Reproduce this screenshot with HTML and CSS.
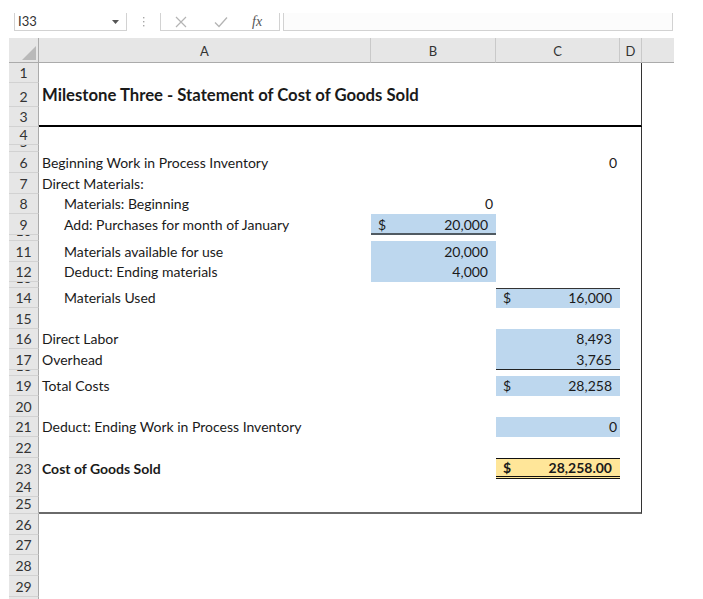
FILE: index.html
```html
<!DOCTYPE html>
<html lang="en">
<head>
<meta charset="utf-8">
<title>Statement of Cost of Goods Sold</title>
<link rel="stylesheet" href="styles.css">
</head>
<body>
<div class="fbar">
  <div class="namebox">
    <span class="ref">I33</span>
    <svg class="dd" width="7" height="4" viewBox="0 0 7 4"><path d="M0 0H7L3.5 4Z" fill="#555"/></svg>
  </div>
  <div class="grip">
    <svg width="3" height="12" viewBox="0 0 3 12"><rect x="1" y="1" width="1.4" height="1.4" fill="#a8a8a8"/><rect x="1" y="5" width="1.4" height="1.4" fill="#a8a8a8"/><rect x="1" y="9" width="1.4" height="1.4" fill="#a8a8a8"/></svg>
  </div>
  <div class="fbtns">
    <svg class="ic-x" width="12" height="12" viewBox="0 0 12 12"><path d="M1 1L11 11M11 1L1 11" stroke="#b4b4b4" stroke-width="1.2" fill="none"/></svg>
    <svg class="ic-ok" width="14" height="12" viewBox="0 0 14 12"><path d="M1 6.5L5 10.5L13 1.5" stroke="#b4b4b4" stroke-width="1.3" fill="none"/></svg>
    <span class="fx">fx</span>
  </div>
  <div class="finput"></div>
</div>

<div class="sheet">
  <div class="row hdr">
    <div class="corner"><svg width="14" height="14" viewBox="0 0 14 14"><path d="M14 0V14H0Z" fill="#b9b9b9"/></svg></div>
    <div class="ch">A</div>
    <div class="ch">B</div>
    <div class="ch">C</div>
    <div class="ch">D</div>
    <div class="ch rest"></div>
  </div>

  <div class="row h20"><div class="rh">1</div><div class="c"></div><div class="c"></div><div class="c"></div><div class="c d"></div></div>
  <div class="row h24"><div class="rh">2</div><div class="c title">Milestone Three - Statement of Cost of Goods Sold</div><div class="c"></div><div class="c"></div><div class="c d"></div></div>
  <div class="row h20"><div class="rh">3</div><div class="c rule"></div><div class="c rule"></div><div class="c rule"></div><div class="c d rule"></div></div>
  <div class="row h18"><div class="rh">4</div><div class="c"></div><div class="c"></div><div class="c"></div><div class="c d"></div></div>
  <div class="row h7"><div class="rh">5</div><div class="c"></div><div class="c"></div><div class="c"></div><div class="c d"></div></div>
  <div class="row h21"><div class="rh">6</div><div class="c">Beginning Work in Process Inventory</div><div class="c"></div><div class="c num">0</div><div class="c d"></div></div>
  <div class="row h21"><div class="rh">7</div><div class="c">Direct Materials:</div><div class="c"></div><div class="c"></div><div class="c d"></div></div>
  <div class="row h20"><div class="rh">8</div><div class="c ind">Materials: Beginning</div><div class="c num">0</div><div class="c"></div><div class="c d"></div></div>
  <div class="row h21"><div class="rh">9</div><div class="c ind">Add: Purchases for month of January</div><div class="c acct blue ul2"><span>$</span><span>20,000</span></div><div class="c"></div><div class="c d"></div></div>
  <div class="row h6"><div class="rh">10</div><div class="c"></div><div class="c"></div><div class="c"></div><div class="c d"></div></div>
  <div class="row h21"><div class="rh">11</div><div class="c ind">Materials available for use</div><div class="c acct blue"><span></span><span>20,000</span></div><div class="c"></div><div class="c d"></div></div>
  <div class="row h20"><div class="rh">12</div><div class="c ind">Deduct: Ending materials</div><div class="c acct blue"><span></span><span>4,000</span></div><div class="c"></div><div class="c d"></div></div>
  <div class="row h6"><div class="rh">13</div><div class="c"></div><div class="c"></div><div class="c"></div><div class="c d"></div></div>
  <div class="row h20"><div class="rh">14</div><div class="c ind">Materials Used</div><div class="c"></div><div class="c acct blue ol1"><span>$</span><span>16,000</span></div><div class="c d"></div></div>
  <div class="row h21"><div class="rh">15</div><div class="c"></div><div class="c"></div><div class="c"></div><div class="c d"></div></div>
  <div class="row h20"><div class="rh">16</div><div class="c">Direct Labor</div><div class="c"></div><div class="c acct blue"><span></span><span>8,493</span></div><div class="c d"></div></div>
  <div class="row h21"><div class="rh">17</div><div class="c">Overhead</div><div class="c"></div><div class="c acct blue ul1"><span></span><span>3,765</span></div><div class="c d"></div></div>
  <div class="row h6"><div class="rh">18</div><div class="c"></div><div class="c"></div><div class="c"></div><div class="c d"></div></div>
  <div class="row h20"><div class="rh">19</div><div class="c">Total Costs</div><div class="c"></div><div class="c acct blue"><span>$</span><span>28,258</span></div><div class="c d"></div></div>
  <div class="row h21"><div class="rh">20</div><div class="c"></div><div class="c"></div><div class="c"></div><div class="c d"></div></div>
  <div class="row h20"><div class="rh">21</div><div class="c">Deduct: Ending Work in Process Inventory</div><div class="c"></div><div class="c num blue">0</div><div class="c d"></div></div>
  <div class="row h21"><div class="rh">22</div><div class="c"></div><div class="c"></div><div class="c"></div><div class="c d"></div></div>
  <div class="row h20"><div class="rh">23</div><div class="c bold">Cost of Goods Sold</div><div class="c"></div><div class="c acct gold bold total"><span>$</span><span>28,258.00</span></div><div class="c d"></div></div>
  <div class="row h19"><div class="rh">24</div><div class="c"></div><div class="c"></div><div class="c"></div><div class="c d"></div></div>
  <div class="row h17"><div class="rh">25</div><div class="c endrule"></div><div class="c endrule"></div><div class="c endrule"></div><div class="c d endrule"></div></div>
  <div class="row h21"><div class="rh">26</div><div class="c"></div><div class="c"></div><div class="c"></div><div class="c"></div></div>
  <div class="row h20"><div class="rh">27</div><div class="c"></div><div class="c"></div><div class="c"></div><div class="c"></div></div>
  <div class="row h21"><div class="rh">28</div><div class="c"></div><div class="c"></div><div class="c"></div><div class="c"></div></div>
  <div class="row h21"><div class="rh">29</div><div class="c"></div><div class="c"></div><div class="c"></div><div class="c"></div></div>
  <div class="row h21"><div class="rh">30</div><div class="c"></div><div class="c"></div><div class="c"></div><div class="c"></div></div>
</div>
</body>
</html>
```

FILE: styles.css
```css
* { box-sizing: border-box; }

html, body {
  margin: 0;
  padding: 0;
  background: #ffffff;
  overflow: hidden;
}

body {
  font-family: Lato, "Liberation Sans", sans-serif;
  font-size: 14px;
  color: #1a1a1a;
}

/* formula bar */
.fbar {
  display: flex;
  height: 18px;
  margin-top: 13px;
}

.namebox {
  margin-left: 14px;
  width: 113px;
  height: 18px;
  border: 1px solid #d2d2d2;
  border-top: none;
  background: #ffffff;
  display: flex;
  align-items: center;
  justify-content: space-between;
  padding: 0 7px 0 3px;
}

.ref {
  font-size: 13px;
  color: #333333;
  line-height: 1;
}

.grip {
  width: 33px;
  display: flex;
  align-items: center;
  justify-content: center;
}

.fbtns {
  width: 120px;
  border: 1px solid #d2d2d2;
  border-top: none;
  background: #ffffff;
  display: flex;
  align-items: center;
  padding-left: 14px;
}

.ic-x { margin-right: 27px; }
.ic-ok { margin-right: 24px; }

.fx {
  font-family: "Liberation Serif", serif;
  font-style: italic;
  font-size: 14px;
  color: #555555;
  line-height: 1;
}

.finput {
  margin-left: 3px;
  width: 390px;
  border: 1px solid #d2d2d2;
  border-top: none;
  background: #fcfcfc;
}

/* sheet grid */
.sheet {
  margin-left: 9px;
  margin-top: 7px;
}

.row {
  display: grid;
  grid-template-columns: 30px 332px 125px 124px 22px;
}

.hdr {
  grid-template-columns: 30px 332px 125px 124px 22px 32px;
  height: 25px;
}

.corner {
  background: #e6e6e6;
  border-right: 1px solid #ababab;
  border-bottom: 1px solid #ababab;
  display: flex;
  align-items: flex-end;
  justify-content: flex-end;
  padding: 0 2px 2px 0;
}

.ch {
  background: #e6e6e6;
  border-right: 1px solid #c9c9c9;
  border-bottom: 1px solid #ababab;
  display: flex;
  align-items: center;
  justify-content: center;
  font-size: 13px;
  color: #333333;
  padding-top: 2px;
}

.ch.rest { border-right: none; }

.h6 { height: 6px; }
.h7 { height: 7px; }
.h17 { height: 17px; }
.h18 { height: 18px; }
.h19 { height: 19px; }
.h20 { height: 20px; }
.h21 { height: 21px; }
.h24 { height: 24px; }

.rh {
  background: #e6e6e6;
  border-right: 1px solid #ababab;
  border-bottom: 1px solid #d2d2d2;
  display: flex;
  align-items: flex-end;
  justify-content: center;
  overflow: hidden;
  font-size: 14px;
  color: #333333;
  line-height: 17px;
  padding-bottom: 1px;
}

.c {
  display: flex;
  align-items: flex-end;
  white-space: nowrap;
  padding: 0 3px 2px 3px;
  line-height: 17px;
}

.d { border-right: 1px solid #333333; }

.title {
  font-weight: 700;
  font-size: 16.7px;
  padding-bottom: 3px;
}

.ind { padding-left: 25px; }

.bold { font-weight: 700; }

.num { justify-content: flex-end; }

.acct {
  justify-content: space-between;
  padding-left: 7px;
  padding-right: 8px;
}

.blue { background: #bdd7ee; }
.gold { background: #ffe699; }

.ul2 { border-bottom: 2px solid #505a62; padding-bottom: 0; }
.ul1 { border-bottom: 1px solid #222222; padding-bottom: 1px; }
.ol1 { border-top: 1px solid #333333; }

.total {
  border-top: 1px solid #111111;
  border-bottom: 3px double #111111;
  padding-bottom: 0;
}

.rule { border-bottom: 2px solid #000000; }
.endrule { border-bottom: 2px solid #6a6a6a; }
```
